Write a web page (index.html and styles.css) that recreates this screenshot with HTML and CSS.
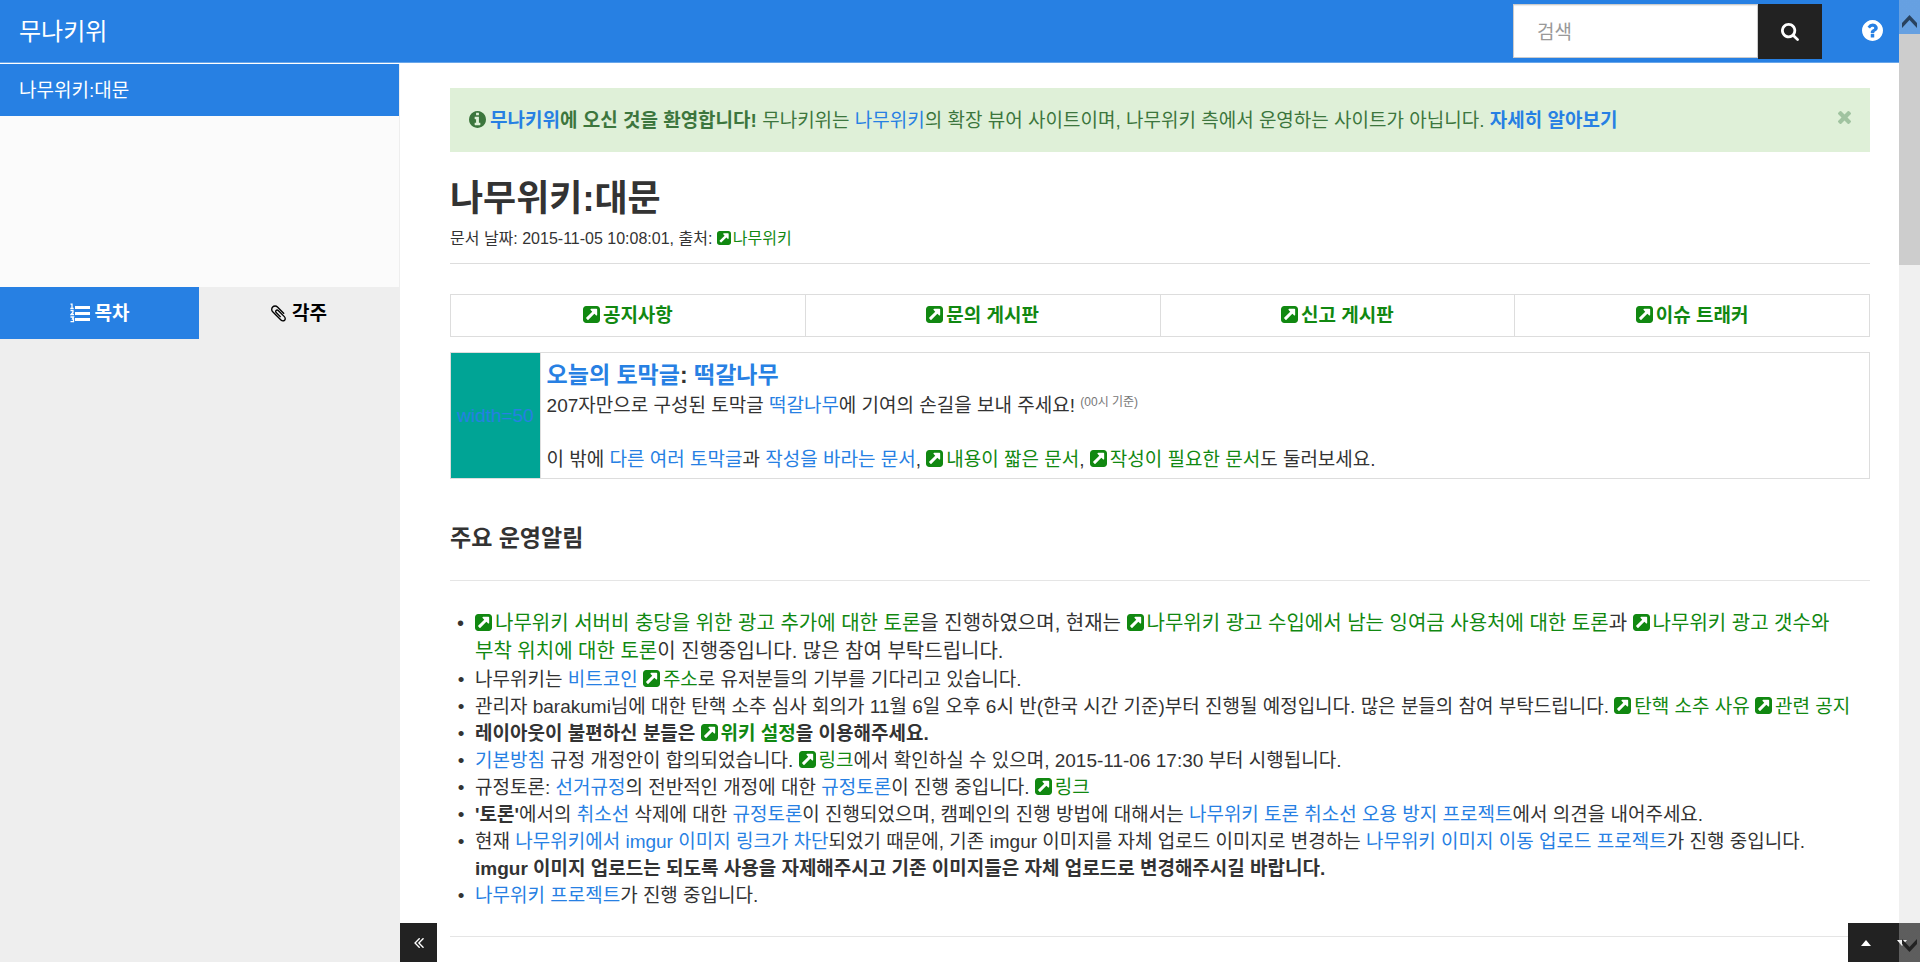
FILE: index.html
```html
<!DOCTYPE html>
<html lang="ko">
<head>
<meta charset="utf-8">
<title>나무위키:대문 - 무나키위</title>
<link rel="stylesheet" href="styles.css">
</head>
<body>
<svg class="sprite" aria-hidden="true">
  <symbol id="ext" viewBox="128 128 1536 1536"><path d="M1408 928v-480q0-26-19-45t-45-19h-480q-42 0-59 39-17 41 14 70l144 144-534 534q-19 19-19 45t19 45l102 102q19 19 45 19t45-19l534-534 144 144q18 19 45 19 12 0 25-5 39-17 39-59zm256-512v960q0 119-84.500 203.500t-203.500 84.500h-960q-119 0-203.500-84.500t-84.500-203.500v-960q0-119 84.500-203.500t203.500-84.500h960q119 0 203.500 84.500t84.500 203.500z"/></symbol>
  <symbol id="info" viewBox="128 128 1536 1536"><path d="M1152 1376v-160q0-14-9-23t-23-9h-96v-512q0-14-9-23t-23-9h-320q-14 0-23 9t-9 23v160q0 14 9 23t23 9h96v320h-96q-14 0-23 9t-9 23v160q0 14 9 23t23 9h448q14 0 23-9t9-23zm-128-896v-160q0-14-9-23t-23-9h-192q-14 0-23 9t-9 23v160q0 14 9 23t23 9h192q14 0 23-9t9-23zm640 416q0 209-103 385.500t-279.500 279.500-385.500 103-385.500-103-279.500-279.500-103-385.500 103-385.500 279.500-279.500 385.500-103 385.500 103 279.500 279.500 103 385.500z"/></symbol>
  <symbol id="question" viewBox="128 128 1536 1536"><path d="M1024 1376v-192q0-14-9-23t-23-9h-192q-14 0-23 9t-9 23v192q0 14 9 23t23 9h192q14 0 23-9t9-23zm256-672q0-88-55.500-163t-138.500-116-170-41q-243 0-371 213-15 24 8 42l132 100q7 6 19 6 16 0 25-12 53-68 86-92 34-24 86-24 48 0 85.500 26t37.500 59q0 38-20 61t-68 45q-63 28-115.500 86.500t-52.500 125.500v36q0 14 9 23t23 9h192q14 0 23-9t9-23q0-19 21.500-49.500t54.500-49.500q32-18 49-28.500t46-35 44.500-48 28-60.500 12.500-81zm384 192q0 209-103 385.500t-279.500 279.500-385.500 103-385.500-103-279.500-279.500-103-385.500 103-385.500 279.500-279.500 385.500-103 385.500 103 279.500 279.500 103 385.500z"/></symbol>
  <symbol id="search" viewBox="64 128 1664 1664"><path d="M1216 832q0-185-131.500-316.500t-316.500-131.500-316.500 131.500-131.500 316.500 131.500 316.500 316.500 131.500 316.500-131.500 131.500-316.500zm512 832q0 52-38 90t-90 38q-54 0-90-38l-343-342q-179 124-399 124-143 0-273.500-55.500t-225-150-150-225-55.500-273.500 55.500-273.500 150-225 225-150 273.500-55.500 273.500 55.500 225 150 150 225 55.500 273.500q0 220-124 399l343 343q37 37 37 90z"/></symbol>
  <symbol id="times" viewBox="302 366 1188 1188"><path d="M1490 1322q0 40-28 68l-136 136q-28 28-68 28t-68-28l-294-294-294 294q-28 28-68 28t-68-28l-136-136q-28-28-28-68t28-68l294-294-294-294q-28-28-28-68t28-68l136-136q28-28 68-28t68 28l294 294 294-294q28-28 68-28t68 28l136 136q28 28 28 68t-28 68l-294 294 294 294q28 28 28 68z"/></symbol>
  <symbol id="collapse" viewBox="407 460 1000 1000"><path d="M1011 1376q0 13-10 23l-50 50q-10 10-23 10t-23-10l-466-466q-10-10-10-23t10-23l466-466q10-10 23-10t23 10l50 50q10 10 10 23t-10 23l-393 393 393 393q10 10 10 23zm384 0q0 13-10 23l-50 50q-10 10-23 10t-23-10l-466-466q-10-10-10-23t10-23l466-466q10-10 23-10t23 10l50 50q10 10 10 23t-10 23l-393 393 393 393q10 10 10 23z"/></symbol>
  <symbol id="clip" viewBox="100 100 1600 1600"><path d="M1596 1385q0 117-79 196t-196 79q-135 0-235-100l-777-776q-113-115-113-271 0-159 110-270t269-111q158 0 273 113l605 606q10 10 10 22 0 16-30.500 46.500t-46.500 30.500q-13 0-23-10l-606-607q-79-77-181-77-106 0-179 75t-73 181q0 105 76 181l776 777q63 63 145 63 64 0 106-42t42-106q0-82-63-145l-581-581q-26-24-60-24-29 0-48 19t-19 48q0 32 25 59l410 410q10 10 10 22 0 16-31 47t-47 31q-12 0-22-10l-410-410q-63-61-63-149 0-82 57-139t139-57q88 0 149 63l581 581q100 98 100 235z"/></symbol>
  <symbol id="list" viewBox="0 0 20 20"><path d="M5 3h15v3H5zM5 9h15v3H5zM5 15h15v3H5z"/><path fill="none" stroke="currentColor" stroke-width="1.300" d="M.500 1.200h1.500v4M.300 5.500h3.400M.500 7.700h2.500v1.500L1 11.500h3M.500 14h3l-1 2h1v2.700h-3"/></symbol>
  <symbol id="chevron" viewBox="0 0 15 13"><path d="M0 8 7.500 0 15 8v5L7.500 5 0 13z"/></symbol>
  <symbol id="caret" viewBox="0 0 10 6"><path d="M0 6 5 0l5 6z"/></symbol>
</svg>

<header class="navbar">
  <a class="brand" href="#">무나키위</a>
  <form class="search">
    <input class="search-field" type="text" placeholder="검색" aria-label="검색">
    <button class="search-button" type="button" aria-label="검색하기"><svg class="icon icon-nav"><use href="#search"/></svg></button>
  </form>
  <a class="help" href="#" aria-label="도움말"><svg class="icon icon-help"><use href="#question"/></svg></a>
</header>

<div class="layout">
  <aside class="sidebar">
    <div class="history"><a class="history-item" href="#">나무위키:대문</a></div>
    <div class="tabs">
      <button class="tab tab-active" type="button"><svg class="icon icon-list"><use href="#list"/></svg>목차</button>
      <button class="tab" type="button"><svg class="icon icon-clip"><use href="#clip"/></svg>각주</button>
    </div>
  </aside>

  <main class="content">
    <div class="alert">
      <p class="alert-text"><svg class="icon icon-info"><use href="#info"/></svg><b><a href="#">무나키위</a>에 오신 것을 환영합니다!</b> 무나키위는 <a href="#">나무위키</a>의 확장 뷰어 사이트이며, 나무위키 측에서 운영하는 사이트가 아닙니다. <b><a href="#">자세히 알아보기</a></b></p>
      <button class="close" type="button" aria-label="닫기"><svg class="icon icon-close"><use href="#times"/></svg></button>
    </div>

    <div class="title">
      <h1>나무위키:대문</h1>
      <p class="meta">문서 날짜: 2015-11-05 10:08:01, 출처: <a class="ext" href="#"><svg class="icon"><use href="#ext"/></svg>나무위키</a></p>
    </div>

    <table class="boards">
      <tr>
        <td><a class="ext" href="#"><svg class="icon"><use href="#ext"/></svg>공지사항</a></td>
        <td><a class="ext" href="#"><svg class="icon"><use href="#ext"/></svg>문의 게시판</a></td>
        <td><a class="ext" href="#"><svg class="icon"><use href="#ext"/></svg>신고 게시판</a></td>
        <td><a class="ext" href="#"><svg class="icon"><use href="#ext"/></svg>이슈 트래커</a></td>
      </tr>
    </table>

    <table class="stub">
      <tr>
        <td class="stub-image"><a href="#">width=50</a></td>
        <td class="stub-body">
          <p class="stub-title"><a href="#">오늘의 토막글</a>: <a href="#">떡갈나무</a></p>
          <p>207자만으로 구성된 토막글 <a href="#">떡갈나무</a>에 기여의 손길을 보내 주세요! <sup>(00시 기준)</sup></p>
          <p class="stub-more">이 밖에 <a href="#">다른 여러 토막글</a>과 <a href="#">작성을 바라는 문서</a>, <a class="ext" href="#"><svg class="icon"><use href="#ext"/></svg>내용이 짧은 문서</a>, <a class="ext" href="#"><svg class="icon"><use href="#ext"/></svg>작성이 필요한 문서</a>도 둘러보세요.</p>
        </td>
      </tr>
    </table>

    <h2>주요 운영알림</h2>
    <ul class="notices">
      <li class="lead"><a class="ext" href="#"><svg class="icon"><use href="#ext"/></svg>나무위키 서버비 충당을 위한 광고 추가에 대한 토론</a>을 진행하였으며, 현재는 <a class="ext" href="#"><svg class="icon"><use href="#ext"/></svg>나무위키 광고 수입에서 남는 잉여금 사용처에 대한 토론</a>과 <a class="ext" href="#"><svg class="icon"><use href="#ext"/></svg>나무위키 광고 갯수와 부착 위치에 대한 토론</a>이 진행중입니다. 많은 참여 부탁드립니다.</li>
      <li>나무위키는 <a href="#">비트코인</a> <a class="ext" href="#"><svg class="icon"><use href="#ext"/></svg>주소</a>로 유저분들의 기부를 기다리고 있습니다.</li>
      <li>관리자 barakumi님에 대한 탄핵 소추 심사 회의가 11월 6일 오후 6시 반(한국 시간 기준)부터 진행될 예정입니다. 많은 분들의 참여 부탁드립니다. <a class="ext" href="#"><svg class="icon"><use href="#ext"/></svg>탄핵 소추 사유</a> <a class="ext" href="#"><svg class="icon"><use href="#ext"/></svg>관련 공지</a></li>
      <li><b>레이아웃이 불편하신 분들은 <a class="ext" href="#"><svg class="icon"><use href="#ext"/></svg>위키 설정</a>을 이용해주세요.</b></li>
      <li><a href="#">기본방침</a> 규정 개정안이 합의되었습니다. <a class="ext" href="#"><svg class="icon"><use href="#ext"/></svg>링크</a>에서 확인하실 수 있으며, 2015-11-06 17:30 부터 시행됩니다.</li>
      <li>규정토론: <a href="#">선거규정</a>의 전반적인 개정에 대한 <a href="#">규정토론</a>이 진행 중입니다. <a class="ext" href="#"><svg class="icon"><use href="#ext"/></svg>링크</a></li>
      <li><b>'토론'</b>에서의 <a href="#">취소선</a> 삭제에 대한 <a href="#">규정토론</a>이 진행되었으며, 캠페인의 진행 방법에 대해서는 <a href="#">나무위키 토론 취소선 오용 방지 프로젝트</a>에서 의견을 내어주세요.</li>
      <li>현재 <a href="#">나무위키에서 imgur 이미지 링크가 차단</a>되었기 때문에, 기존 imgur 이미지를 자체 업로드 이미지로 변경하는 <a href="#">나무위키 이미지 이동 업로드 프로젝트</a>가 진행 중입니다.<br><b>imgur 이미지 업로드는 되도록 사용을 자제해주시고 기존 이미지들은 자체 업로드로 변경해주시길 바랍니다.</b></li>
      <li><a href="#">나무위키 프로젝트</a>가 진행 중입니다.</li>
    </ul>
    <hr>
  </main>
</div>

<button class="corner corner-left" type="button" aria-label="사이드바 접기"><svg class="icon icon-collapse"><use href="#collapse"/></svg></button>
<div class="corner corner-right">
  <button class="jump" type="button" aria-label="맨 위로"><svg class="icon icon-caret"><use href="#caret"/></svg></button>
  <button class="jump" type="button" aria-label="맨 아래로"><svg class="icon icon-caret icon-flip"><use href="#caret"/></svg></button>
</div>
<div class="scrollbar" aria-hidden="true">
  <span class="scroll-step"><svg class="icon icon-chevron"><use href="#chevron"/></svg></span>
  <span class="scroll-thumb"></span>
  <span class="scroll-step scroll-end"><svg class="icon icon-chevron icon-flip"><use href="#chevron"/></svg></span>
</div>
</body>
</html>
```
FILE: styles.css
```css
* { box-sizing: border-box; }
html, body { height: 100%; }
body {
  margin: 0;
  display: flex;
  flex-direction: column;
  overflow: hidden;
  background: #fff;
  color: #333;
  font: 19px/27px "Liberation Sans", "Noto Sans CJK KR", sans-serif;
  word-break: keep-all;
}
p, h1, h2, ul { margin: 0; }
a { color: #2780e3; text-decoration: none; }
button { border: 0; padding: 0; font: inherit; cursor: pointer; }
.sprite { position: absolute; width: 0; height: 0; }
.icon { width: 17px; height: 17px; fill: currentColor; }
.icon-flip { transform: rotate(180deg); }

.navbar {
  flex: none;
  display: flex;
  align-items: flex-start;
  height: 64px;
  padding-right: 37px;
  background: #2780e3;
  border-bottom: 1px solid #fff;
  box-shadow: inset 0 -1px #68a6ea;
}
.brand { padding: 18px 19px 17px; margin-right: auto; color: #fff; font-size: 24px; }
.search { display: flex; padding-top: 4px; }
.search-field {
  width: 245px;
  height: 54px;
  padding: 13px 23px 10px;
  border: 1px solid #ccc;
  border-radius: 0;
  box-shadow: inset 0 1px 1px rgba(0, 0, 0, .08);
  font: inherit;
}
.search-field::placeholder { color: #999; }
.search-button { display: grid; place-items: center; width: 64px; height: 55px; background: #222; color: #fff; }
.icon-nav { width: 18px; height: 18px; }
.help { display: grid; padding: 20px 0 0 40px; color: #fff; }
.icon-help { width: 21px; height: 21px; }

.layout { flex: 1; display: flex; min-height: 0; }
.sidebar { flex: none; width: 400px; background: #eee; }
.history { height: 223px; background: #fbfbfb; border-right: 1px solid #eee; }
.history-item { display: block; padding: 13px 19px 12px; background: #2780e3; color: #fff; }
.tabs { display: flex; padding-right: 2px; }
.tab { flex: 1; display: flex; align-items: center; justify-content: center; gap: 5px; height: 52px; background: #eee; color: #000; font-weight: 700; }
.tab-active { background: #2780e3; color: #fff; }
.icon-list { width: 20px; height: 20px; }
.icon-clip { width: 17px; height: 17px; }

.content { flex: 1; min-width: 0; padding: 24px 50px 0; }
.alert { display: flex; align-items: center; height: 64px; padding: 0 19px; background: #dff0d8; color: #3c763d; }
.alert-text { flex: 1; }
.icon-info { margin-right: 4px; vertical-align: -1px; }
.close { display: grid; align-self: flex-start; padding-top: 23px; background: none; color: #a0c3a0; }
.icon-close { width: 13px; height: 13px; }

.title { padding: 23px 0 8px; border-bottom: 1px solid #ddd; }
h1 { font-size: 36px; line-height: 48px; }
.meta { padding: 4px 0; font-size: 16px; line-height: 24px; }
.ext { color: #118811; }
.ext .icon { margin-right: 3px; vertical-align: -1px; }
.meta .ext .icon { width: 14px; height: 14px; margin-right: 2px; }

table { width: 100%; border-collapse: collapse; }
td { border: 1px solid #ddd; }
.boards { margin-top: 30px; table-layout: fixed; }
.boards td { padding: 7px 6px; text-align: center; font-weight: 700; }
.stub { margin-top: 15px; }
.stub-image { width: 89px; padding: 0 6px; background: #00a495; text-align: center; }
.stub-body { padding: 7px 6px 5px; }
.stub-title { margin-bottom: 2px; font-size: 23px; line-height: 30px; font-weight: 700; }
.stub-more { margin-top: 27px; }
sup { color: #777; font-size: 12px; line-height: 0; vertical-align: 6px; }

h2 { margin-top: 44px; padding-bottom: 26px; border-bottom: 1px solid #e5e5e5; font-size: 23px; line-height: 31px; }
.notices { margin-top: 28px; padding: 0 12px 0 25px; }
.notices li::marker { content: "•\00a0\00a0"; }
.lead { font-size: 20px; line-height: 28px; margin-bottom: 1px; }
hr { margin: 27px 0 0; border: 0; border-top: 1px solid #e5e5e5; }

.corner { position: fixed; bottom: 0; height: 39px; background: #222; color: #fff; }
.corner-left { left: 400px; width: 37px; display: grid; place-items: center; }
.corner-right { right: 0; width: 72px; display: flex; }
.jump { flex: 1; display: grid; place-items: center; background: none; color: inherit; }
.icon-collapse { width: 10px; height: 10px; }
.icon-caret { width: 10px; height: 6px; }

.scrollbar { position: fixed; top: 0; right: 0; bottom: 0; width: 21px; display: flex; flex-direction: column; background: linear-gradient(rgba(221, 221, 221, .35) 63px, #f0f0f0 63px calc(100% - 39px), rgba(205, 205, 205, .35) calc(100% - 39px)); }
.scroll-step { display: grid; place-items: center; height: 34px; padding-top: 8px; color: #29425e; }
.scroll-thumb { height: 231px; background: #cdcdcd; }
.scroll-end { margin-top: auto; padding: 0; color: #222; }
.icon-chevron { width: 15px; height: 13px; }
```
